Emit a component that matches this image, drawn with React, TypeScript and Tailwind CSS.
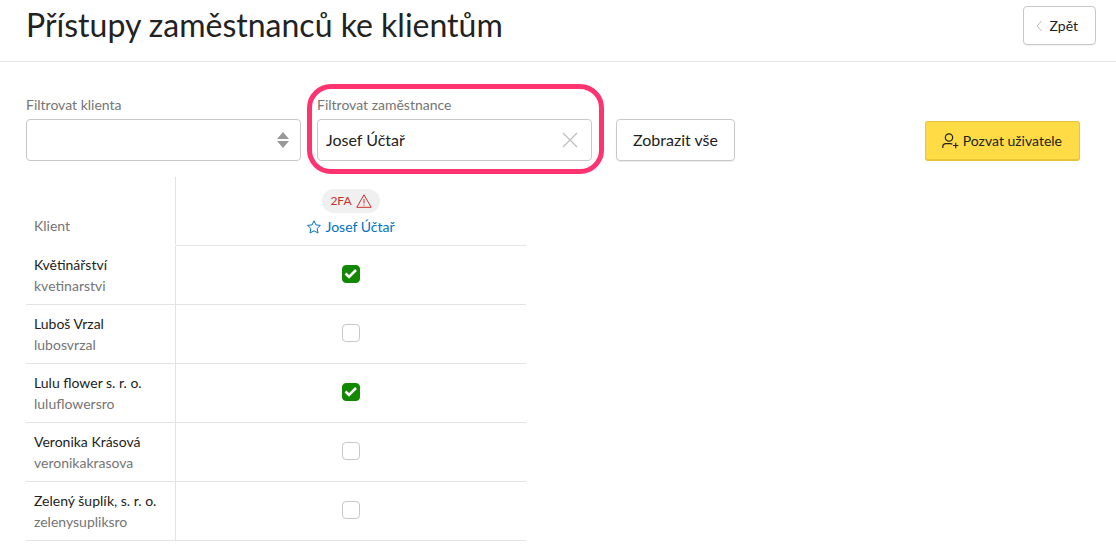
import { useState } from 'react'

const initialClients = [
  { name: 'Květinářství', slug: 'kvetinarstvi', access: true },
  { name: 'Luboš Vrzal', slug: 'lubosvrzal', access: false },
  { name: 'Lulu flower s. r. o.', slug: 'luluflowersro', access: true },
  { name: 'Veronika Krásová', slug: 'veronikakrasova', access: false },
  { name: 'Zelený šuplík, s. r. o.', slug: 'zelenysupliksro', access: false },
]

function Header() {
  return (
    <header className="flex items-start justify-between border-b border-[#e3e3e3] pt-1.5 pr-5 pb-4 pl-[26px]">
      <h1 className="text-[32px] leading-[38px] font-normal">Přístupy zaměstnanců ke klientům</h1>
      <button
        type="button"
        className="flex h-[39px] items-center gap-2 rounded border border-[#c8c8c8] pr-[17px] pl-3 text-sm shadow-[0_1px_1px_rgba(0,0,0,0.06)]"
      >
        <svg className="h-3 w-[6px]" viewBox="0 0 6 12" fill="none" stroke="#bdbdbd" aria-hidden="true">
          <path d="M5.5 1 1 6l4.5 5" />
        </svg>
        Zpět
      </button>
    </header>
  )
}

function Filters() {
  const [employee, setEmployee] = useState('Josef Účtař')

  return (
    <div className="flex items-end">
      <div className="w-[275px]">
        <label htmlFor="client" className="block text-sm leading-7 text-[#757575]">
          Filtrovat klienta
        </label>
        <div className="relative">
          <select id="client" className="block h-[42px] w-full appearance-none rounded border border-[#c8c8c8] bg-white px-2 text-base">
            <option value=""></option>
            {initialClients.map((c) => (
              <option key={c.slug}>{c.name}</option>
            ))}
          </select>
          <svg className="pointer-events-none absolute top-[13px] right-3 h-4 w-3" viewBox="0 0 12 16" fill="#999" aria-hidden="true">
            <path d="M6 0 12 7H0zM6 16 0 9h12z" />
          </svg>
        </div>
      </div>

      <div className="relative ml-4 w-[275px]">
        {/* Highlight */}
        <div className="pointer-events-none absolute -top-[7px] -right-3 -bottom-[13px] -left-[10px] rounded-[24px] border-5 border-[#ff3370]" />
        <label htmlFor="employee" className="block text-sm leading-7 text-[#757575]">
          Filtrovat zaměstnance
        </label>
        <div className="relative">
          <input
            id="employee"
            type="text"
            value={employee}
            onChange={(e) => setEmployee(e.target.value)}
            className="block h-[42px] w-full rounded border border-[#c8c8c8] pr-10 pb-0.5 pl-2 text-base"
          />
          <button type="button" aria-label="Vymazat" onClick={() => setEmployee('')} className="absolute top-[13px] right-3.5">
            <svg className="size-4" viewBox="0 0 16 16" fill="none" stroke="#bdbdbd" strokeWidth="1.2" aria-hidden="true">
              <path d="m1 1 14 14M15 1 1 15" />
            </svg>
          </button>
        </div>
      </div>

      <button
        type="button"
        className="ml-6 h-[42px] rounded border border-[#c8c8c8] px-4 text-base shadow-[0_1px_1px_rgba(0,0,0,0.08)]"
      >
        Zobrazit vše
      </button>

      <button
        type="button"
        className="ml-auto flex h-10 items-center gap-1 rounded-[3px] border border-b-2 border-[#e6c53c] bg-[#ffdc46] pr-[17px] pl-4 text-sm"
      >
        <svg className="h-4 w-[17px]" viewBox="0 0 17 16" fill="none" stroke="#222" strokeWidth="1.2" aria-hidden="true">
          <circle cx="7" cy="4.5" r="3.7" />
          <path d="M.8 15v-1.200c0-2 1.300-3.100 3.200-3.100h4.500c.8 0 1.400.2 1.900.5M13.700 9.800v5.400M11 12.500h5.400" />
        </svg>
        Pozvat uživatele
      </button>
    </div>
  )
}

function AccessTable() {
  const [clients, setClients] = useState(initialClients)

  const toggle = (slug: string) =>
    setClients(clients.map((c) => (c.slug === slug ? { ...c, access: !c.access } : c)))

  return (
    <table className="mt-4 w-[500px] table-fixed border-separate border-spacing-0 text-sm leading-[21px]">
      <thead>
        <tr>
          <th scope="col" className="w-[150px] border-r border-b-2 border-r-[#e3e3e3] border-b-transparent px-2 pb-2 text-left align-bottom font-normal text-[#757575]">
            Klient
          </th>
          <th scope="col" className="border-b border-[#e3e3e3] pt-3 pb-2 font-normal">
            <div className="flex flex-col items-center gap-[3px]">
              <span className="flex h-6 items-center gap-1 rounded-full bg-[#f0f0f0] px-2 text-xs text-[#c7302b]">
                2FA
                <svg className="h-[14px] w-4" viewBox="0 0 16 14" fill="none" stroke="#c7302b" aria-hidden="true">
                  <path d="M8 .8 15.200 13.300H.8zM8 5v4.500M8 10.500v1.200" strokeLinejoin="round" />
                </svg>
              </span>
              <a href="#josef" className="flex items-center gap-1 text-[#0071c2]">
                <svg className="size-[14px]" viewBox="0 0 14 14" fill="none" stroke="#0071c2" strokeLinejoin="round" aria-hidden="true">
                  <path d="m7 .8 1.900 4.100 4.500.5-3.300 3.100.9 4.500L7 10.800 3 13l.9-4.500L.6 5.400l4.500-.5z" />
                </svg>
                Josef Účtař
              </a>
            </div>
          </th>
        </tr>
      </thead>
      <tbody>
        {clients.map((c) => (
          <tr key={c.slug}>
            <td className="border-r border-b border-[#e3e3e3] p-2 pr-0">
              <label htmlFor={c.slug} className="block">
                {c.name}
                <span className="block text-[#757575]">{c.slug}</span>
              </label>
            </td>
            <td className="border-b border-[#e3e3e3] pb-0.5">
              <div className="relative mx-auto size-[18px]">
                <input
                  id={c.slug}
                  type="checkbox"
                  checked={c.access}
                  onChange={() => toggle(c.slug)}
                  className="peer block size-full appearance-none rounded border border-[#c8c8c8] checked:border-[#128800] checked:bg-[#128800]"
                />
                <svg
                  className="pointer-events-none absolute inset-0 hidden size-full peer-checked:block"
                  viewBox="0 0 18 18"
                  fill="none"
                  stroke="#fff"
                  strokeWidth="2.600"
                  aria-hidden="true"
                >
                  <path d="m3.500 8.500 3.500 3.500 7-7" />
                </svg>
              </div>
            </td>
          </tr>
        ))}
      </tbody>
    </table>
  )
}

export default function App() {
  return (
    <div className="bg-white font-[Lato,sans-serif] text-[#222]">
      <Header />
      <main className="pt-[29px] pr-9 pb-3.5 pl-[26px]">
        <Filters />
        <AccessTable />
      </main>
    </div>
  )
}
